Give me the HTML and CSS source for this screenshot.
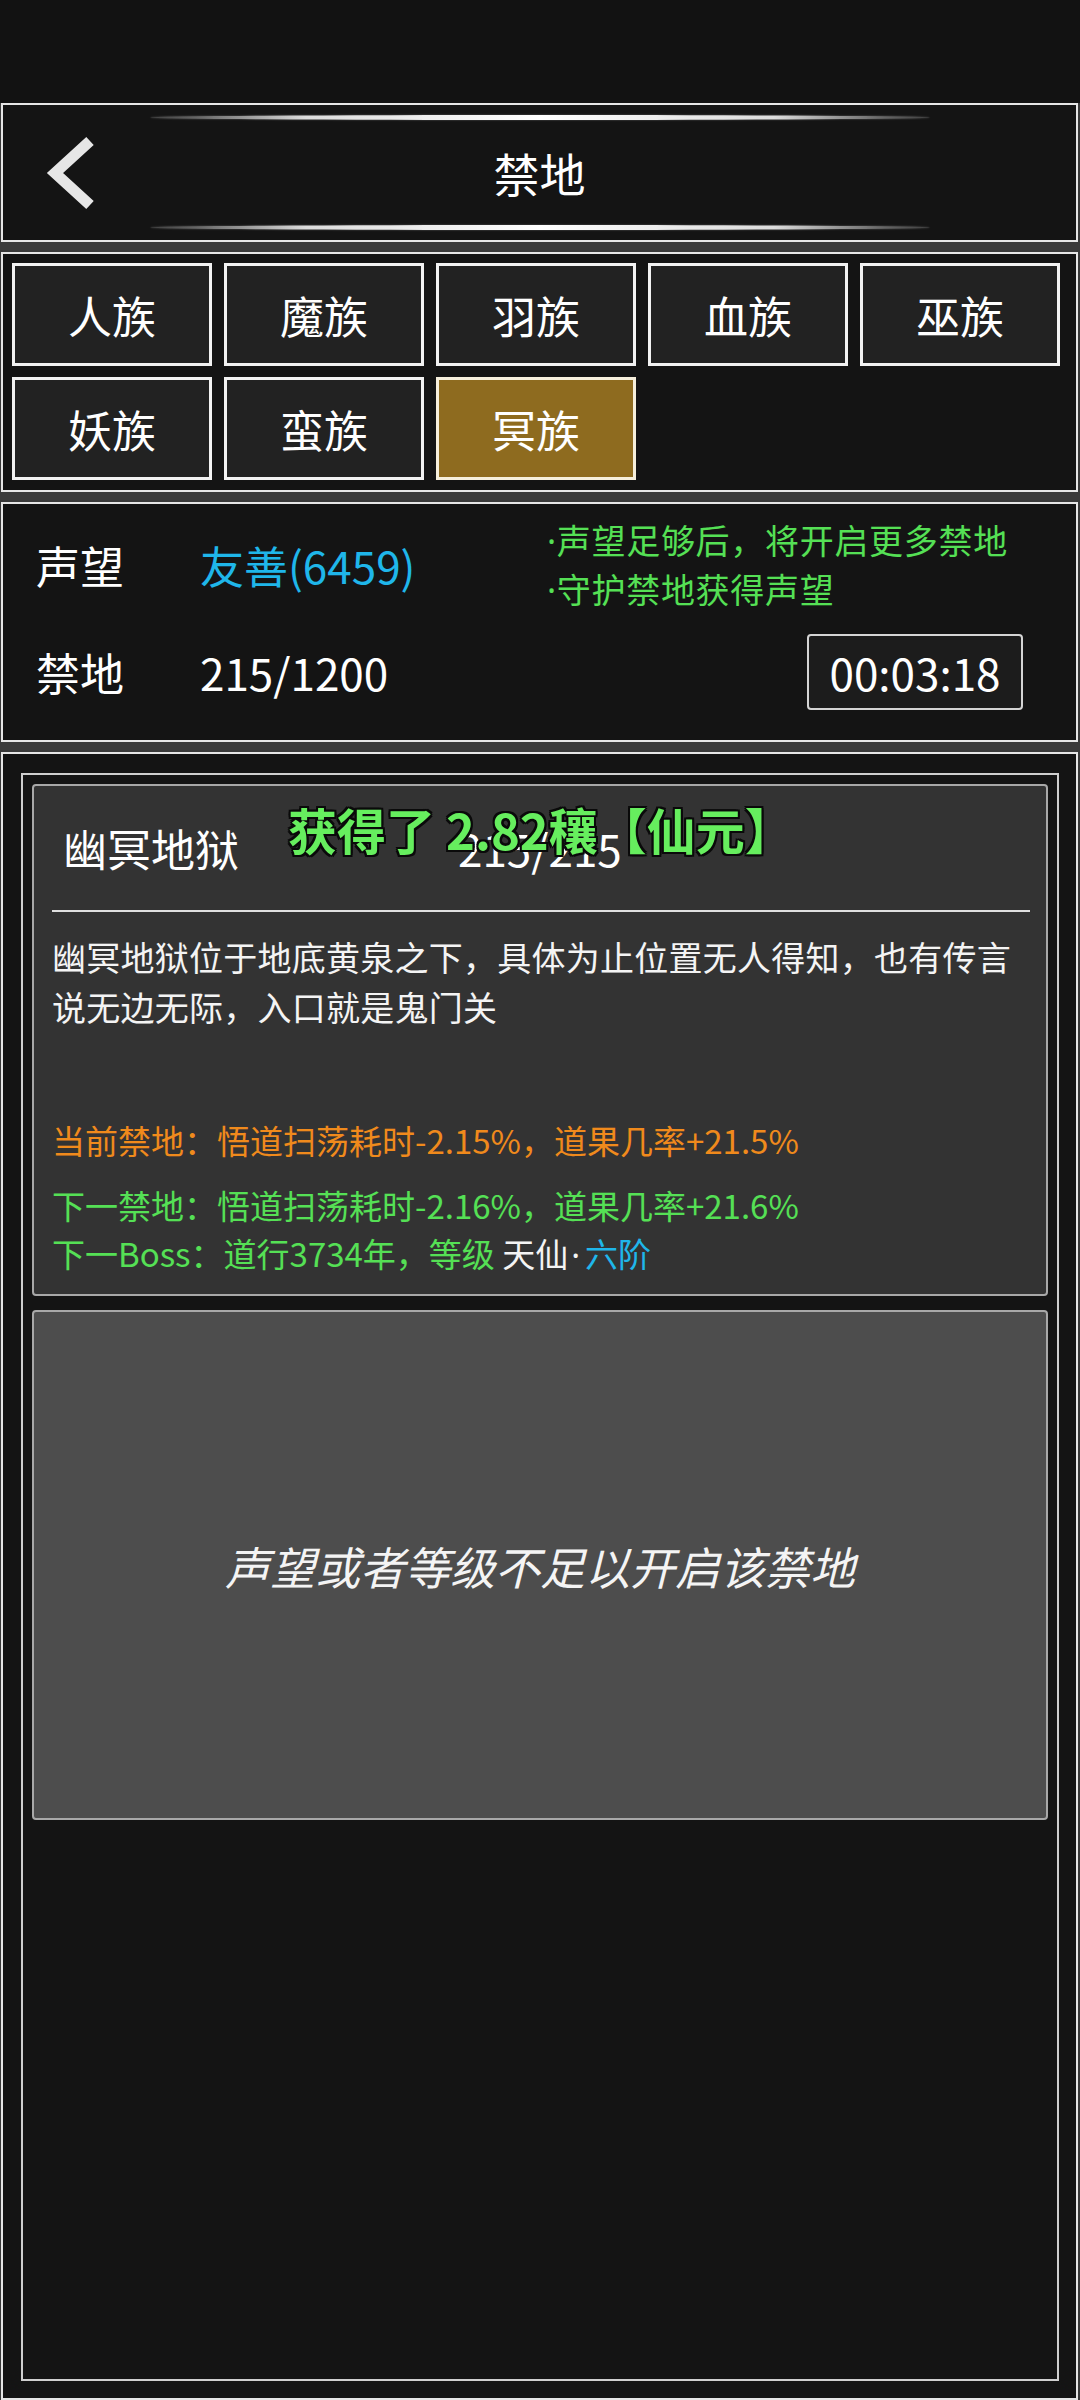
FILE: index.html
```html
<!DOCTYPE html>
<html lang="zh-CN">
<head>
<meta charset="utf-8">
<title>禁地</title>
<link rel="stylesheet" href="styles.css">
</head>
<body>
<div class="statusbar"></div>
<main class="screen">
  <header class="panel header">
    <div class="back">
      <svg class="back-icon" width="60" height="90" viewBox="0 0 60 90" aria-hidden="true">
        <polyline points="50,13 15,45 50,77" fill="none" stroke="#e6e6e6" stroke-width="11" stroke-linejoin="miter" stroke-linecap="butt"/>
      </svg>
    </div>
    <div class="title-wrap">
      <div class="glow"></div>
      <h1 class="title">禁地</h1>
      <div class="glow"></div>
    </div>
    <div></div>
  </header>

  <nav class="panel tabs">
    <button class="tab">人族</button>
    <button class="tab">魔族</button>
    <button class="tab">羽族</button>
    <button class="tab">血族</button>
    <button class="tab">巫族</button>
    <button class="tab">妖族</button>
    <button class="tab">蛮族</button>
    <button class="tab active">冥族</button>
  </nav>

  <section class="panel info">
    <div class="label">声望</div>
    <div class="value cyan">友善(6459)</div>
    <div class="notes">
      <p><span class="dot">·</span>声望足够后，将开启更多禁地</p>
      <p><span class="dot">·</span>守护禁地获得声望</p>
    </div>
    <div class="label">禁地</div>
    <div class="value">215/1200</div>
    <div class="timer-cell"><div class="timer">00:03:18</div></div>
  </section>

  <section class="panel content">
    <div class="frame">
      <article class="card">
        <div class="card-head">
          <span class="name">幽冥地狱</span>
          <span class="count">215/215</span>
          <div class="toast">获得了 2.82穰【仙元】</div>
        </div>
        <div class="divider"></div>
        <p class="desc">幽冥地狱位于地底黄泉之下，具体为止位置无人得知，也有传言说无边无际，入口就是鬼门关</p>
        <p class="effect orange current">当前禁地：悟道扫荡耗时-2.15%，道果几率+21.5%</p>
        <p class="effect green next">下一禁地：悟道扫荡耗时-2.16%，道果几率+21.6%</p>
        <p class="effect green">下一Boss：道行3734年，等级 <span class="white">天仙<span class="dot spaced">·</span></span><span class="cyan">六阶</span></p>
      </article>
      <div class="card locked">声望或者等级不足以开启该禁地</div>
    </div>
  </section>
</main>
</body>
</html>
```

FILE: styles.css
```css
* {
  box-sizing: border-box;
}

html, body {
  margin: 0;
  padding: 0;
}

body {
  width: 1080px;
  height: 2400px;
  overflow: hidden;
  background: #121212;
  font-family: "Noto Sans CJK SC", "Noto Sans", sans-serif;
  color: #f2f2f2;
}

p, h1 {
  margin: 0;
}

.statusbar {
  height: 103px;
  background: #121212;
}

.screen {
  background: #3a3a3a;
  display: flex;
  flex-direction: column;
  gap: 10px;
  height: 2297px;
}

.panel {
  margin: 0 2px 0 1px;
  border: 2px solid #e6e6e6;
  background: #141414;
}

/* Header */
.header {
  height: 139px;
  display: grid;
  grid-template-columns: 1fr 780px 1fr;
}

.back {
  display: flex;
  align-items: center;
  padding-left: 37px;
}

.back-icon {
  display: block;
}

.title-wrap {
  display: flex;
  flex-direction: column;
  padding: 10px 0;
}

.glow {
  height: 5px;
  border-radius: 50%;
  background: linear-gradient(90deg,
    rgba(255,255,255,0.18) 0%,
    rgba(255,255,255,0.35) 6%,
    rgba(255,255,255,0.85) 20%,
    #ffffff 50%,
    rgba(255,255,255,0.85) 80%,
    rgba(255,255,255,0.35) 94%,
    rgba(255,255,255,0.18) 100%);
  box-shadow: 0 0 2px rgba(255,255,255,0.35);
}

.title {
  height: 105px;
  line-height: 105px;
  text-align: center;
  font-size: 46px;
  font-weight: 400;
  color: #ffffff;
}

/* Tabs */
.tabs {
  height: 240px;
  display: grid;
  grid-template-columns: repeat(5, 200px);
  grid-auto-rows: 103px;
  column-gap: 12px;
  row-gap: 11px;
  padding: 9px 0 0 9px;
  align-content: start;
}

.tab {
  border: 3px solid #f2f2f2;
  background: #222222;
  color: #ffffff;
  font-family: "Noto Sans CJK SC", sans-serif;
  font-size: 44px;
  padding: 0;
  margin: 0;
}

.tab.active {
  background: #8e6b1f;
  border-color: #f6efdc;
}

/* Info */
.info {
  height: 240px;
  display: grid;
  grid-template-columns: 164px 347px 1fr;
  grid-template-rows: 96px 76px;
  row-gap: 21px;
  padding: 13px 53px 30px 33px;
  align-items: center;
}

.label, .value {
  font-size: 44px;
  line-height: 60px;
  color: #ffffff;
}

.cyan {
  color: #1fb6ea;
}

.value.cyan {
  color: #1fb6ea;
}

.dot {
  font-family: "Noto Sans", "DejaVu Sans", sans-serif;
}

.dot.spaced {
  padding: 0 5px 0 3px;
}

.notes {
  color: #55e055;
  font-size: 34px;
  line-height: 48px;
  white-space: nowrap;
  letter-spacing: 0.7px;
}

.timer-cell {
  display: flex;
  justify-content: flex-end;
  align-items: center;
  height: 76px;
}

.timer {
  width: 216px;
  height: 76px;
  border: 2px solid #d4d4d4;
  border-radius: 4px;
  background: #1c1c1c;
  color: #ffffff;
  font-size: 44px;
  line-height: 72px;
  text-align: center;
}

/* Content */
.content {
  flex: 1;
}

.frame {
  margin: 19px 17px 0 18px;
  height: 1608px;
  border: 2px solid #cfcfcf;
  padding: 9px;
}

.card {
  border: 2px solid #a8a8a8;
  border-radius: 4px;
  background: #333333;
}

.card:not(.locked) {
  height: 512px;
  padding: 0 16px 0 18px;
}

.card-head {
  position: relative;
  height: 124px;
  display: grid;
  grid-template-columns: 395px auto;
  align-items: center;
  padding-left: 11px;
  font-size: 44px;
  color: #ffffff;
}

.toast {
  position: absolute;
  left: 236px;
  top: 12px;
  line-height: 62px;
  font-size: 49px;
  font-weight: 700;
  color: #66ee5e;
  white-space: nowrap;
  text-shadow:
    -2px -2px 0 #0a0a0a, 2px -2px 0 #0a0a0a, -2px 2px 0 #0a0a0a, 2px 2px 0 #0a0a0a,
    0 -2px 0 #0a0a0a, 0 2px 0 #0a0a0a, -2px 0 0 #0a0a0a, 2px 0 0 #0a0a0a;
}

.divider {
  height: 2px;
  background: #e0e0e0;
}

.desc {
  padding-top: 20px;
  font-size: 34px;
  line-height: 50px;
  letter-spacing: 0.25px;
  color: #f4f4f4;
}

.effect {
  font-size: 33px;
  line-height: 48px;
}

.effect.current {
  margin-top: 84px;
}

.effect.next {
  margin-top: 17px;
}

.orange {
  color: #f08a1c;
}

.green {
  color: #55e055;
}

.white {
  color: #f4f4f4;
}

.card.locked {
  margin-top: 14px;
  height: 510px;
  background: #4d4d4d;
  display: flex;
  align-items: center;
  justify-content: center;
  font-size: 45px;
  font-style: italic;
  color: #f4f4f4;
}
```
